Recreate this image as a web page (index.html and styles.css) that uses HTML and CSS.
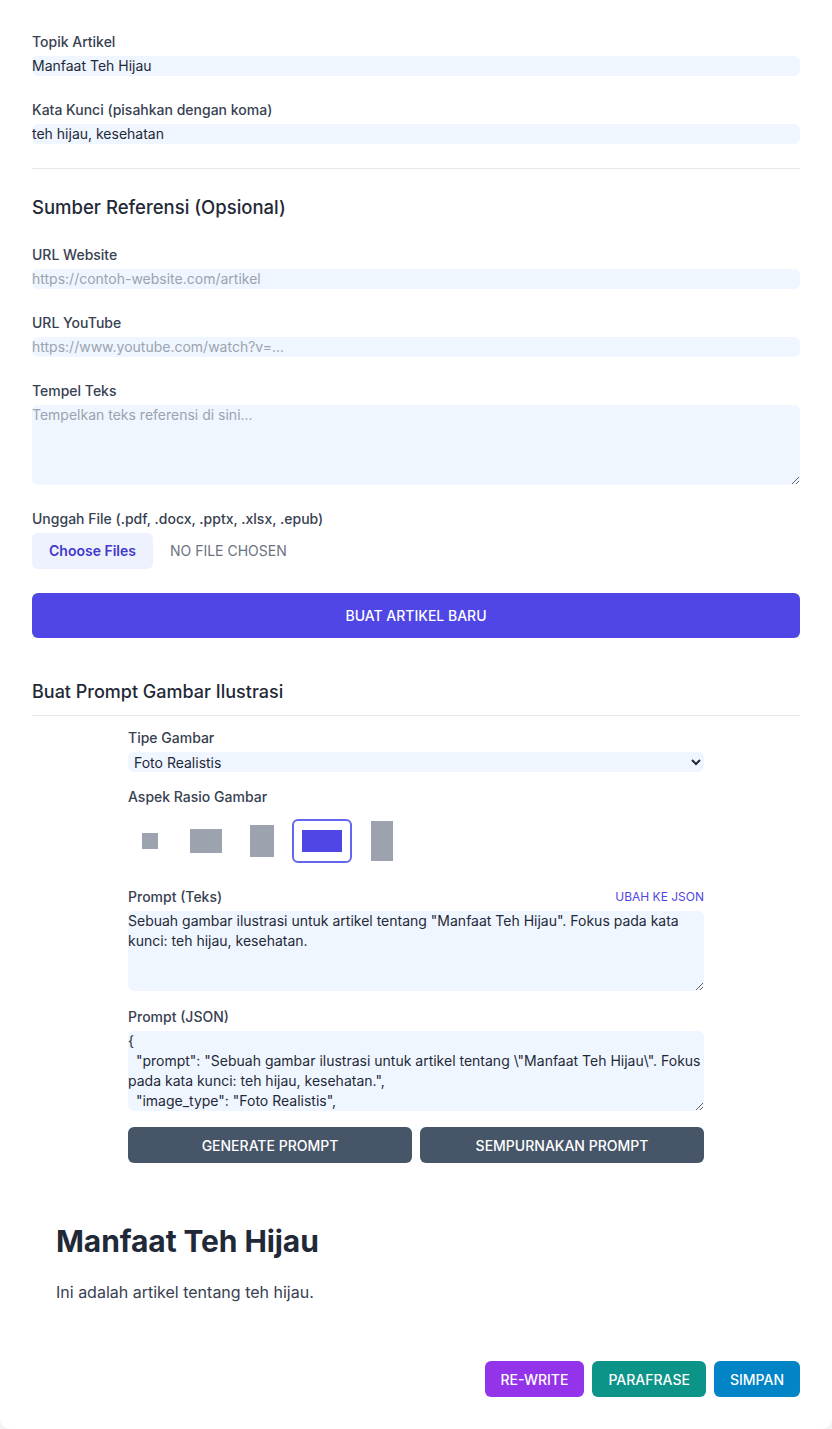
FILE: index.html
```html
<!DOCTYPE html>
<html lang="id">
<head>
<meta charset="utf-8">
<title>Artikel</title>
<link rel="stylesheet" href="styles.css">
</head>
<body>
<main class="card">
  <section class="form-block">
    <div class="field">
      <label class="label">Topik Artikel</label>
      <input class="input" type="text" value="Manfaat Teh Hijau">
    </div>
    <div class="field">
      <label class="label">Kata Kunci (pisahkan dengan koma)</label>
      <input class="input" type="text" value="teh hijau, kesehatan">
    </div>
  </section>

  <hr class="divider">

  <section class="form-block">
    <h2 class="section-title wide">Sumber Referensi (Opsional)</h2>
    <div class="field">
      <label class="label">URL Website</label>
      <input class="input" type="text" placeholder="https://contoh-website.com/artikel">
    </div>
    <div class="field">
      <label class="label">URL YouTube</label>
      <input class="input" type="text" placeholder="https://www.youtube.com/watch?v=...">
    </div>
    <div class="field">
      <label class="label">Tempel Teks</label>
      <textarea class="textarea" placeholder="Tempelkan teks referensi di sini..."></textarea>
    </div>
    <div class="field">
      <label class="label">Unggah File (.pdf, .docx, .pptx, .xlsx, .epub)</label>
      <div class="file-row">
        <button class="file-btn" type="button">Choose Files</button>
        <span class="file-name">No file chosen</span>
      </div>
    </div>
    <button class="primary-btn" type="button">Buat Artikel Baru</button>
  </section>

  <section class="prompt-section">
    <h2 class="section-title bordered">Buat Prompt Gambar Ilustrasi</h2>
    <div class="prompt-inner">
      <div class="field">
        <label class="label">Tipe Gambar</label>
        <select class="select">
          <option>Foto Realistis</option>
        </select>
      </div>
      <div class="field">
        <label class="label">Aspek Rasio Gambar</label>
        <div class="ratio-row">
          <button class="ratio" type="button"><span class="shape r-1-1"></span></button>
          <button class="ratio" type="button"><span class="shape r-4-3"></span></button>
          <button class="ratio" type="button"><span class="shape r-3-4"></span></button>
          <button class="ratio active" type="button"><span class="shape r-16-9"></span></button>
          <button class="ratio" type="button"><span class="shape r-9-16"></span></button>
        </div>
      </div>
      <div class="field">
        <div class="label-row">
          <label class="label">Prompt (Teks)</label>
          <button class="link-btn" type="button">Ubah ke JSON</button>
        </div>
        <textarea class="textarea">Sebuah gambar ilustrasi untuk artikel tentang "Manfaat Teh Hijau". Fokus pada kata kunci: teh hijau, kesehatan.</textarea>
      </div>
      <div class="field">
        <label class="label">Prompt (JSON)</label>
        <textarea class="textarea">{
  "prompt": "Sebuah gambar ilustrasi untuk artikel tentang \"Manfaat Teh Hijau\". Fokus pada kata kunci: teh hijau, kesehatan.",
  "image_type": "Foto Realistis",
  "aspect_ratio": "16:9"
}</textarea>
      </div>
      <div class="btn-grid">
        <button class="dark-btn" type="button">Generate Prompt</button>
        <button class="dark-btn" type="button">Sempurnakan Prompt</button>
      </div>
    </div>
  </section>

  <article class="article">
    <h1 class="article-title">Manfaat Teh Hijau</h1>
    <p class="article-text">Ini adalah artikel tentang teh hijau.</p>
  </article>

  <div class="actions">
    <button class="act-btn purple" type="button">Re-write</button>
    <button class="act-btn teal" type="button">Parafrase</button>
    <button class="act-btn sky" type="button">Simpan</button>
  </div>
</main>
</body>
</html>
```

FILE: styles.css
```css
* { box-sizing: border-box; }

html, body {
  margin: 0;
  padding: 0;
}

body {
  background: #f3f4f6;
  font-family: Inter, "Noto Sans", sans-serif;
  color: #1f2937;
  font-size: 14px;
  line-height: 20px;
}

.card {
  background: #ffffff;
  width: 832px;
  height: 1429px;
  padding: 32px;
  border-radius: 0 0 10px 10px;
  display: flex;
  flex-direction: column;
}

.form-block {
  display: flex;
  flex-direction: column;
  gap: 24px;
}

.field {
  display: flex;
  flex-direction: column;
  gap: 4px;
}

.label {
  font-size: 14px;
  line-height: 20px;
  font-weight: 500;
  color: #374151;
}

.input, .textarea, .select {
  font-family: inherit;
  font-size: 14px;
  line-height: 20px;
  color: #1f2937;
  background: #eff6ff;
  border: none;
  border-radius: 6px;
  padding: 0;
  margin: 0;
  width: 100%;
  outline: none;
}

.input { height: 20px; }

.input::placeholder, .textarea::placeholder {
  color: #9ca3af;
  opacity: 1;
}

.textarea {
  height: 80px;
  display: block;
  resize: vertical;
}

.select {
  height: 20px;
  padding-left: 2px;
}

.divider {
  border: none;
  border-top: 1px solid #e5e7eb;
  margin: 24px 0;
  height: 0;
}

.section-title {
  margin: 0;
  font-size: 18px;
  line-height: 28px;
  font-weight: 500;
  color: #1f2937;
}

.section-title.wide {
  font-size: 18.5px;
}

.file-row {
  display: flex;
  align-items: center;
  gap: 17px;
}

.file-btn {
  font-family: inherit;
  font-size: 14px;
  line-height: 20px;
  font-weight: 600;
  color: #4338ca;
  background: #eef2ff;
  border: none;
  border-radius: 6px;
  height: 36px;
  padding: 0 17px;
}

.file-name {
  text-transform: uppercase;
  color: #6b7280;
  font-size: 14px;
}

.primary-btn {
  font-family: inherit;
  font-size: 14px;
  font-weight: 500;
  color: #ffffff;
  background: #4f46e5;
  border: none;
  border-radius: 6px;
  height: 45px;
  width: 100%;
  text-transform: uppercase;
}

.prompt-section {
  margin-top: 40px;
  display: flex;
  flex-direction: column;
}

.section-title.bordered {
  padding-bottom: 9px;
  border-bottom: 1px solid #e5e7eb;
}

.prompt-inner {
  width: 576px;
  margin: 12px auto 0;
  display: flex;
  flex-direction: column;
  gap: 16px;
}

.prompt-inner .field:nth-child(2) {
  margin-top: -1px;
}

.ratio-row {
  display: flex;
  align-items: center;
  gap: 8px;
  height: 60px;
}

.ratio {
  min-width: 44px;
  min-height: 44px;
  padding: 8px;
  border: 2px solid transparent;
  border-radius: 6px;
  background: transparent;
  display: flex;
  align-items: center;
  justify-content: center;
}

.ratio.active {
  border-color: #6366f1;
}

.shape {
  display: block;
  background: #9ca3af;
}

.ratio.active .shape { background: #4f46e5; }

.r-1-1 { width: 16px; height: 16px; }
.r-4-3 { width: 32px; height: 24px; }
.r-3-4 { width: 24px; height: 32px; }
.r-16-9 { width: 40px; height: 22.5px; }
.r-9-16 { width: 22.5px; height: 40px; }

.label-row {
  display: flex;
  justify-content: space-between;
  align-items: center;
}

.link-btn {
  font-family: inherit;
  font-size: 12px;
  line-height: 16px;
  color: #4f46e5;
  background: none;
  border: none;
  padding: 0;
  text-transform: uppercase;
}

.btn-grid {
  display: grid;
  grid-template-columns: 1fr 1fr;
  gap: 8px;
}

.dark-btn {
  font-family: inherit;
  font-size: 14px;
  font-weight: 500;
  color: #ffffff;
  background: #475569;
  border: none;
  border-radius: 6px;
  height: 36px;
  text-transform: uppercase;
}

.article {
  margin-top: 60px;
  padding: 0 24px;
}

.article-title {
  margin: 0;
  font-size: 30px;
  line-height: 36px;
  font-weight: 700;
  letter-spacing: -0.1px;
  color: #1f2937;
}

.article-text {
  margin: 21px 0 0;
  font-size: 16px;
  line-height: 24px;
  color: #374151;
}

.actions {
  margin-top: auto;
  display: flex;
  justify-content: flex-end;
  gap: 8px;
}

.act-btn {
  font-family: inherit;
  font-size: 14px;
  font-weight: 500;
  color: #ffffff;
  border: none;
  border-radius: 6px;
  height: 36px;
  padding: 0 16px;
  text-transform: uppercase;
}

.purple { background: #9333ea; }
.teal { background: #0d9488; }
.sky { background: #0284c7; }
```
